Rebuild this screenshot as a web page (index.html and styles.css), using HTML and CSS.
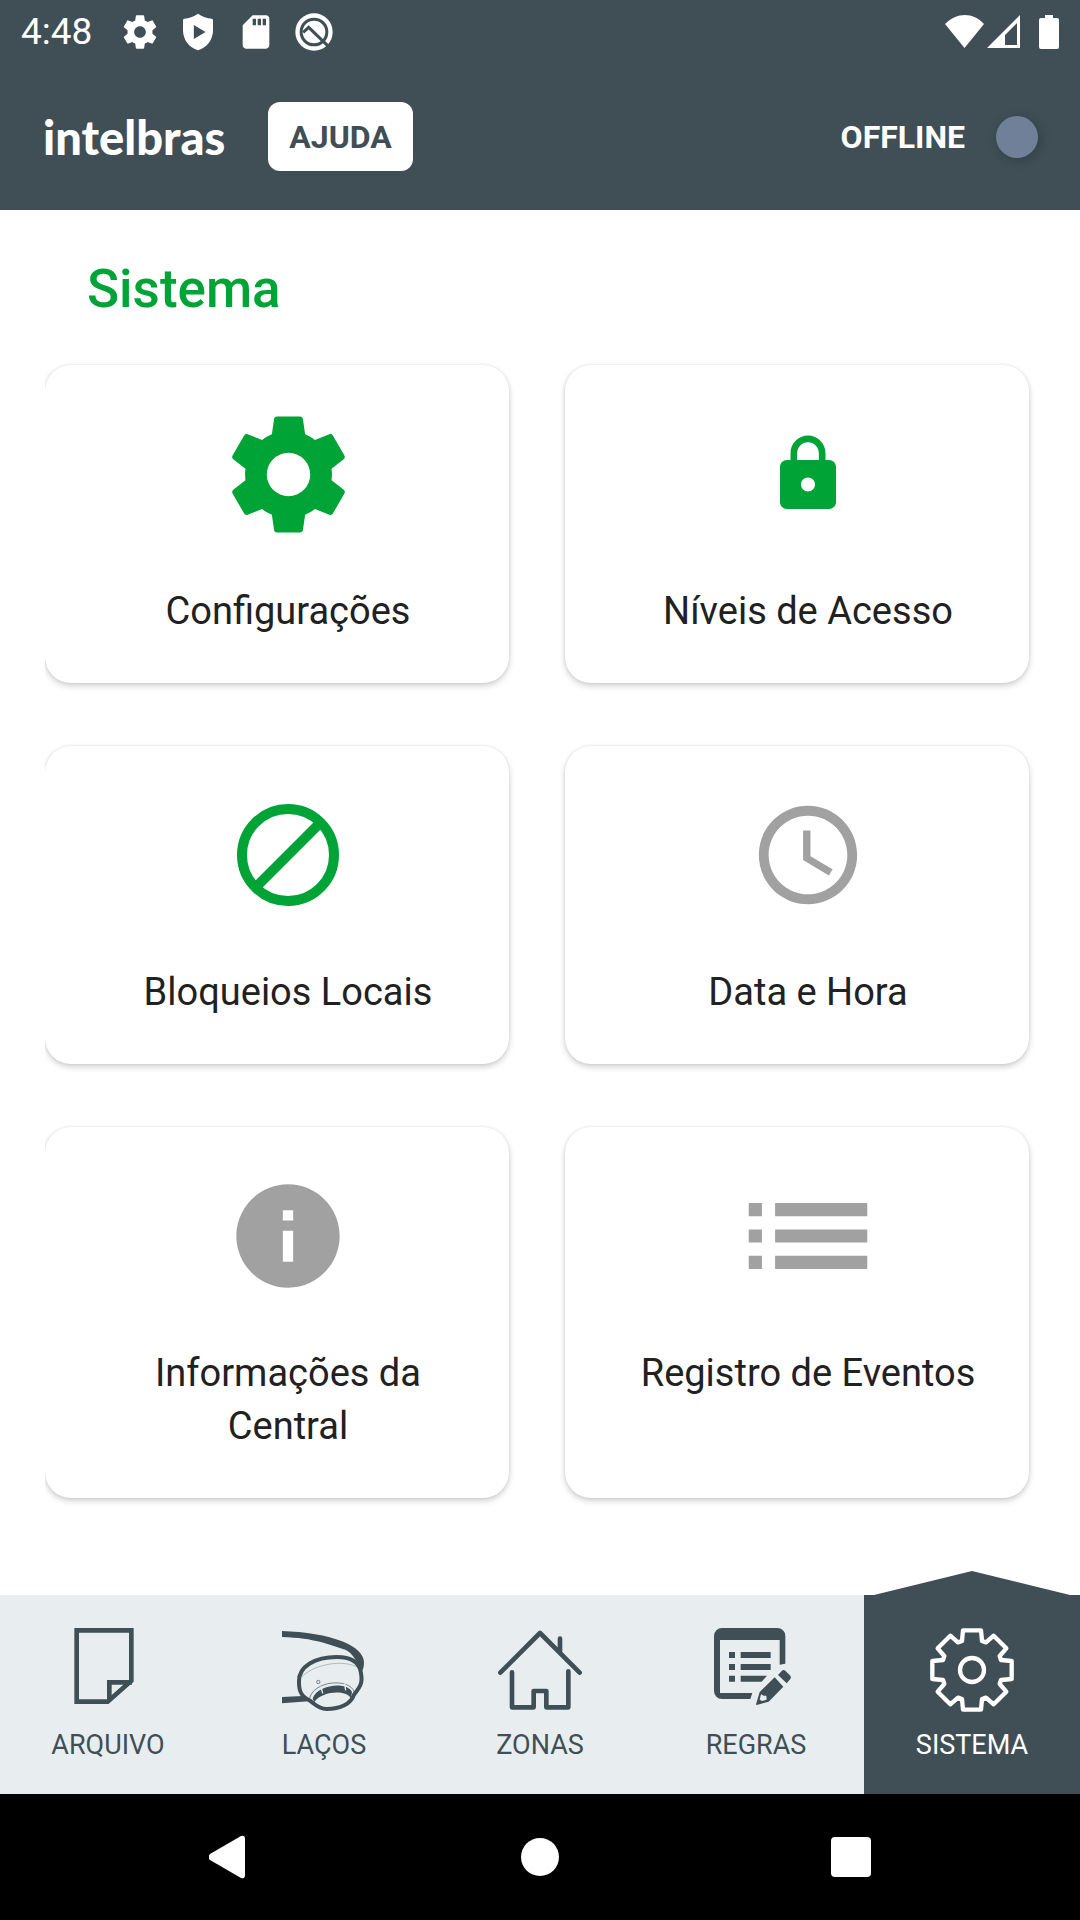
FILE: index.html
```html
<!DOCTYPE html>
<html lang="pt-BR">
<head>
<meta charset="utf-8">
<meta name="viewport" content="width=device-width, initial-scale=1">
<title>Sistema</title>
<link rel="stylesheet" href="styles.css">
</head>
<body>
<div class="screen">
  <div class="status-bar">
    <span class="clock">4:48</span>
    <div class="notifications">
      <svg class="status-icon" viewBox="0 0 24 24"><path d="M19.43 12.98c.04-.32.07-.64.07-.98s-.03-.66-.07-.98l2.11-1.65c.19-.15.24-.42.12-.64l-2-3.46c-.12-.22-.39-.3-.61-.22l-2.49 1c-.52-.4-1.08-.73-1.69-.98l-.38-2.65C14.46 2.18 14.25 2 14 2h-4c-.25 0-.46.18-.49.42l-.38 2.65c-.61.25-1.17.59-1.69.98l-2.49-1c-.23-.09-.49 0-.61.22l-2 3.46c-.13.22-.07.49.12.64l2.11 1.65c-.04.32-.07.65-.07.98s.03.66.07.98l-2.11 1.65c-.19.15-.24.42-.12.64l2 3.46c.12.22.39.3.61.22l2.49-1c.52.4 1.08.73 1.69.98l.38 2.65c.03.24.24.42.49.42h4c.25 0 .46-.18.49-.42l.38-2.65c.61-.25 1.17-.59 1.69-.98l2.49 1c.23.09.49 0 .61-.22l2-3.46c.12-.22.07-.49-.12-.64l-2.11-1.65zM12 15.5c-1.93 0-3.5-1.57-3.5-3.5s1.57-3.5 3.5-3.5 3.5 1.57 3.5 3.5-1.57 3.5-3.5 3.5z"/></svg>
      <svg class="status-icon" viewBox="0 0 24 24"><path fill-rule="evenodd" d="M12 1c-2.500 1.700-5.500 2.900-8.200 3.100-.5.100-.8.400-.8.900v6c0 5.500 3.500 10.400 9 12 5.500-1.600 9-6.500 9-12V5c0-.5-.3-.8-.8-.9C17.500 3.900 14.500 2.700 12 1zM9.500 7.800l7 4.200-7 4.200z"/></svg>
      <svg class="status-icon" viewBox="0 0 24 24"><path d="M18 2h-8L4.020 8 4 20c0 1.100.9 2 2 2h12c1.100 0 2-.9 2-2V4c0-1.100-.9-2-2-2zm-6 6h-2V4h2v4zm3 0h-2V4h2v4zm3 0h-2V4h2v4z"/></svg>
      <svg class="status-icon" viewBox="0 0 24 24"><circle cx="12" cy="12" r="11.200"/><g class="cutout" stroke-width="1.800"><circle cx="12" cy="12" r="7.700"/><path d="M5.500 12.200 8.800 9.200 20.500 20.500"/></g></svg>
    </div>
    <svg class="signals" viewBox="0 0 114 36"><path d="M0 10C12-2 28-2 39 10L19.500 34z"/><path fill-rule="evenodd" d="M42 34 75 1v33zM60 31h12V9L60 21z"/><path d="M100 1h8v3h4q2 0 2 2v27q0 2-2 2H96q-2 0-2-2V6q0-2 2-2h4z"/></svg>
  </div>

  <header class="app-bar">
    <span class="brand">intelbras</span>
    <button class="help" type="button">AJUDA</button>
    <span class="connection">OFFLINE</span>
    <span class="connection-dot"></span>
  </header>

  <main class="content">
    <h1 class="title">Sistema</h1>
    <div class="cards">
      <a class="card" href="#configuracoes">
        <span class="card-icon green"><svg width="139" height="139" viewBox="0 0 24 24"><path d="M19.430 12.980c.04-.32.07-.64.07-.98s-.03-.66-.07-.98l2.110-1.650c.19-.15.24-.42.12-.64l-2-3.460c-.12-.22-.39-.3-.61-.22l-2.490 1c-.52-.4-1.080-.73-1.690-.98l-.38-2.650C14.460 2.180 14.250 2 14 2h-4c-.25 0-.46.18-.49.42l-.38 2.650c-.61.25-1.170.59-1.690.98l-2.490-1c-.23-.09-.49 0-.61.22l-2 3.460c-.13.22-.07.49.12.64l2.110 1.650c-.04.32-.07.65-.07.98s.03.66.07.98l-2.110 1.650c-.19.15-.24.42-.12.64l2 3.460c.12.22.39.3.61.22l2.490-1c.52.4 1.080.73 1.690.98l.38 2.650c.03.24.24.42.49.42h4c.25 0 .46-.18.49-.42l.38-2.650c.61-.25 1.170-.59 1.690-.98l2.490 1c.23.09.49 0 .61-.22l2-3.460c.12-.22.07-.49-.12-.64l-2.110-1.650zM12 15.750A3.750 3.750 0 1 1 12 8.250a3.750 3.750 0 0 1 0 7.500z"/></svg></span>
        <span class="card-label">Configurações</span>
      </a>
      <a class="card" href="#niveis">
        <span class="card-icon green"><svg width="84" height="84" viewBox="0 0 24 24"><path d="M18 8h-1V6c0-2.760-2.240-5-5-5S7 3.240 7 6v2H6c-1.100 0-2 .9-2 2v10c0 1.100.9 2 2 2h12c1.100 0 2-.9 2-2V10c0-1.100-.9-2-2-2zm-6 9c-1.100 0-2-.9-2-2s.9-2 2-2 2 .9 2 2-.9 2-2 2zm3.100-9H8.900V6c0-1.710 1.390-3.100 3.100-3.100s3.100 1.390 3.100 3.100v2z"/></svg></span>
        <span class="card-label">Níveis de Acesso</span>
      </a>
      <a class="card" href="#bloqueios">
        <span class="card-icon green"><svg width="102" height="102" viewBox="0 0 102 102"><g fill="none" stroke="currentColor" stroke-width="10"><circle cx="51" cy="51" r="46"/><path d="M18 84 84 18"/></g></svg></span>
        <span class="card-label">Bloqueios Locais</span>
      </a>
      <a class="card" href="#data">
        <span class="card-icon"><svg width="118" height="118" viewBox="0 0 24 24"><path d="M11.990 2C6.470 2 2 6.480 2 12s4.470 10 9.990 10C17.520 22 22 17.520 22 12S17.520 2 11.990 2zM12 20c-4.420 0-8-3.580-8-8s3.580-8 8-8 8 3.580 8 8-3.580 8-8 8z"/><path d="M12.500 7H11v6l5.250 3.150.75-1.230-4.500-2.670z"/></svg></span>
        <span class="card-label">Data e Hora</span>
      </a>
      <a class="card" href="#informacoes">
        <span class="card-icon"><svg width="124" height="124" viewBox="0 0 24 24"><path d="M12 2C6.480 2 2 6.480 2 12s4.480 10 10 10 10-4.480 10-10S17.520 2 12 2zm1 15h-2v-6h2v6zm0-8h-2V7h2v2z"/></svg></span>
        <span class="card-label">Informações da Central</span>
      </a>
      <a class="card" href="#eventos">
        <span class="card-icon"><svg width="158" height="158" viewBox="0 0 24 24"><path d="M3 13h2v-2H3v2zm0 4h2v-2H3v2zm0-8h2V7H3v2zm4 4h14v-2H7v2zm0 4h14v-2H7v2zM7 7v2h14V7H7z"/></svg></span>
        <span class="card-label">Registro de Eventos</span>
      </a>
    </div>
  </main>

  <nav class="tabs">
    <a class="tab" href="#arquivo">
      <svg class="tab-icon" viewBox="0 0 252 252"><g fill="none" stroke="currentColor" stroke-width="14"><path d="M32 7H196V158L125 221H32z"/><path d="M130 218V163H198"/></g></svg>
      <span>ARQUIVO</span>
    </a>
    <a class="tab" href="#lacos">
      <svg class="tab-icon" viewBox="0 0 252 252"><path d="M0 9C70 11 135 22 180 40 225 58 246 80 246 104 246 116 243 126 238 132L230 116C224 98 212 76 190 65 140 50 100 30 0 27z"/><path d="M0 207 62 204 80 220 0 226z"/><g fill="none" stroke="currentColor"><path stroke-width="12" d="M51 160C50 115 100 87 164 87 205 87 230 100 236 130 242 160 240 170 216 200 207 228 175 243 134 243 108 242 98 228 84 218 62 206 50 196 51 160z"/><path stroke-width="1" d="M58 148C90 112 180 90 232 120"/><circle cx="109" cy="162" r="5" stroke-width="2"/><path stroke-width="2" d="M82 214C92 158 202 148 217 192"/></g><path d="M92 212C104 172 192 158 210 192L207 210C188 184 120 190 97 222z"/><g class="tick" stroke-width="4"><path d="M117 176l5 20M188 167l3 20"/></g></svg>
      <span>LAÇOS</span>
    </a>
    <a class="tab" href="#zonas">
      <svg class="tab-icon" viewBox="0 0 252 252"><path fill="none" stroke="currentColor" stroke-width="14" stroke-linecap="round" stroke-linejoin="round" d="M7 134 126 15 245 134M186 32V70M42 133V238H107V189H145V238H211V130"/></svg>
      <span>ZONAS</span>
    </a>
    <a class="tab" href="#regras">
      <svg class="tab-icon" viewBox="0 0 252 252"><path d="M24 0H190A24 24 0 0 1 214 24V107L197 110V36H18V195H115L109 213H24A24 24 0 0 1 0 189V24A24 24 0 0 1 24 0z"/><path d="M45 72h18v18H45zM45 108h18v18H45zM45 143h18v18H45zM80 72h90v18H80zM80 108h90v18H80zM80 143h79L143 161H80z"/><path fill-rule="evenodd" d="M182 148 208 176 164 221 128 231Q125 230 127 226L137 192zM141 199 137 215 144 219 158 215 157 203 149 203z"/><path d="M192 141 203 129Q208 124 214 128L229 143Q233 148 229 153L218 166z"/></svg>
      <span>REGRAS</span>
    </a>
    <a class="tab active" href="#sistema" aria-current="page">
      <svg class="tab-icon" viewBox="-126 -126 252 252"><g fill="none" stroke="currentColor" stroke-width="13" stroke-linejoin="round"><circle r="36"/><path d="M-30-87-27-119H27L30-87 42-83 65-103 103-65 83-42 87-30 119-27V27L87 30 83 42 103 65 65 103 42 83 30 87 27 119H-27L-30 87-42 83-65 103-103 65-83 42-87 30-119 27V-27L-87-30-83-42-103-65-65-103-42-83z"/></g></svg>
      <span>SISTEMA</span>
    </a>
  </nav>

  <div class="system-nav">
    <button type="button" aria-label="Voltar"><svg viewBox="0 0 40 44"><path d="M1 19 32 1Q36 0 36 4V40Q36 44 32 43L1 25Q-2 22 1 19z"/></svg></button>
    <button type="button" aria-label="Início"><svg viewBox="0 0 40 44"><circle cx="20" cy="22" r="19"/></svg></button>
    <button type="button" aria-label="Recentes"><svg viewBox="0 0 40 44"><rect y="2" width="40" height="40" rx="4"/></svg></button>
  </div>
</div>
</body>
</html>
```

FILE: styles.css
```css
:root {
  --slate: #3f4f55;
  --mist: #e8eef0;
  --green: #00a335;
  --grey: #a1a1a1;
}

* {
  box-sizing: border-box;
}

body {
  margin: 0;
  background: #fff;
  font-family: Roboto, "Liberation Sans", sans-serif;
}

svg {
  display: block;
  fill: currentColor;
}

a {
  color: inherit;
  text-decoration: none;
}

.screen {
  display: flex;
  flex-direction: column;
  min-height: 100vh;
}

.status-bar {
  display: flex;
  align-items: center;
  height: 63px;
  padding: 0 21px;
  background: var(--slate);
  color: #fff;
}

.clock {
  font-size: 37px;
  line-height: 44px;
}

.notifications {
  display: flex;
  gap: 18px;
  margin: 0 auto 0 28px;
}

.status-icon {
  width: 40px;
  height: 40px;
}

.cutout {
  fill: none;
  stroke: var(--slate);
}

.signals {
  width: 114px;
  height: 36px;
}

.app-bar {
  display: flex;
  align-items: center;
  height: 147px;
  padding: 0 42px 0 43px;
  background: var(--slate);
  color: #fff;
  font-size: 32px;
  font-weight: 700;
}

.brand {
  font-family: Lato, sans-serif;
  font-size: 47px;
  font-weight: 900;
  line-height: 56px;
}

.help {
  height: 69px;
  margin: 0 auto 0 43px;
  padding: 0 21px;
  border: 0;
  border-radius: 12px;
  background: #fff;
  color: var(--slate);
  font: inherit;
}

.connection-dot {
  width: 42px;
  height: 42px;
  margin-left: 31px;
  border-radius: 50%;
  background: #718099;
  box-shadow: 2px 2px 12px rgba(0, 0, 0, 0.2);
}

.content {
  flex: 1;
  padding: 49px 51px 48px 45px;
}

.title {
  margin: 0 0 46px;
  padding-left: 42px;
  color: var(--green);
  font-size: 53px;
  font-weight: 500;
  line-height: 60px;
}

.cards {
  display: grid;
  grid-template-columns: 1fr 1fr;
  gap: 63px 56px;
  clip-path: inset(-20px -20px -20px 0);
}

.card {
  display: flex;
  flex-direction: column;
  gap: 32px;
  padding: 30px 31px 45px 53px;
  border-radius: 26px;
  background: #fff;
  box-shadow: 0 3px 6px rgba(0, 0, 0, 0.18), 0 0 3px rgba(0, 0, 0, 0.1);
  color: #212121;
  text-align: center;
}

.card-icon {
  display: flex;
  align-items: center;
  justify-content: center;
  height: 158px;
  color: var(--grey);
}

.card-icon.green {
  color: var(--green);
}

.card-label {
  font-size: 38px;
  line-height: 53px;
}

.tabs {
  display: grid;
  grid-template-columns: repeat(5, 1fr);
  background: var(--mist);
}

.tab {
  position: relative;
  display: flex;
  flex-direction: column;
  align-items: center;
  gap: 17px;
  padding: 33px 0;
  color: var(--slate);
  font-size: 27px;
  line-height: 32px;
}

.tab.active {
  background: var(--slate);
  color: #fff;
}

.tab.active::before {
  content: "";
  position: absolute;
  right: 10px;
  bottom: 100%;
  left: 10px;
  height: 24px;
  background: var(--slate);
  clip-path: polygon(50% 0, 100% 100%, 0 100%);
}

.tab-icon {
  width: 84px;
  height: 84px;
}

.tick {
  stroke: var(--mist);
}

.system-nav {
  display: flex;
  align-items: center;
  justify-content: center;
  gap: 271px;
  height: 126px;
  background: #000;
}

.system-nav button {
  width: 40px;
  height: 44px;
  padding: 0;
  border: 0;
  background: none;
  color: #fff;
}
```
